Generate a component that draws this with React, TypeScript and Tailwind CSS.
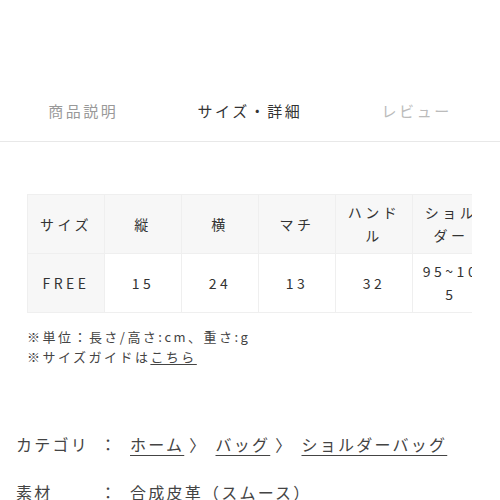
import React from "react";

const font = { fontFamily: '"Noto Sans CJK JP", "Noto Sans", sans-serif' };

export default function App() {
  const headers = ["サイズ", "縦", "横", "マチ", "ハンドル", "ショルダー"];
  const values = ["FREE", "15", "24", "13", "32", "95~105"];
  return (
    <div className="w-[500px] h-[500px] overflow-hidden bg-white text-[#333]" style={font}>
      <div className="h-[85px]" />
      <div className="grid grid-cols-3 h-[57px] border-b border-[#e8e8e8] text-[15px] tracking-[0.17em]">
        <div className="flex items-center justify-center pb-[3px] text-[#999]">商品説明</div>
        <div className="flex items-center justify-center pb-[3px] text-[#333]">サイズ・詳細</div>
        <div className="flex items-center justify-center pb-[3px] text-[#bbb]">レビュー</div>
      </div>
      <div className="h-[52px]" />
      <div className="ml-[27px] w-[445px] overflow-hidden">
        <table className="table-fixed border-collapse w-[462px] text-[14px] tracking-[0.25em] text-[#333]">
          <colgroup>
            {headers.map((h) => (
              <col key={h} className="w-[77px]" />
            ))}
          </colgroup>
          <tbody>
            <tr className="h-[59px] bg-[#f7f7f7]">
              {headers.map((h, i) => (
                <td
                  key={h}
                  className="border border-[#efefef] text-center align-middle leading-[23px] px-[4px]"
                >
                  {i === 4 ? (
                    <>ハンド<br />ル</>
                  ) : i === 5 ? (
                    <>ショル<br />ダー</>
                  ) : (
                    h
                  )}
                </td>
              ))}
            </tr>
            <tr className="h-[59px]">
              {values.map((v, i) => (
                <td
                  key={i}
                  className={`border border-[#efefef] text-center align-middle leading-[23px] px-[4px] ${i === 0 ? "bg-[#f7f7f7]" : "bg-white"}`}
                >
                  {i === 5 ? (
                    <div className="whitespace-nowrap -mx-[8px]">95~10<br />5</div>
                  ) : (
                    v
                  )}
                </td>
              ))}
            </tr>
          </tbody>
        </table>
      </div>
      <div className="ml-[27px] mt-[14px] text-[13px] leading-[20px] tracking-[0.19em] text-[#444]">
        <div>※単位：長さ/高さ:cm、重さ:g</div>
        <div>
          ※サイズガイドは<span className="underline underline-offset-2">こちら</span>
        </div>
      </div>
      <div className="ml-[16px] mt-[65px] text-[16px] tracking-[0.14em] text-[#444]">
        <div className="flex items-center h-[24px]">
          <span className="w-[84px]">カテゴリ</span>
          <span className="w-[30px]">：</span>
          <span className="underline underline-offset-4">ホーム</span>
          <span className="ml-[5px] mr-[8px]">〉</span>
          <span className="underline underline-offset-4">バッグ</span>
          <span className="ml-[5px] mr-[8px]">〉</span>
          <span className="underline underline-offset-4">ショルダーバッグ</span>
        </div>
        <div className="flex items-center h-[24px] mt-[24px]">
          <span className="w-[84px]">素材</span>
          <span className="w-[30px]">：</span>
          <span>合成皮革（スムース）</span>
        </div>
      </div>
    </div>
  );
}
